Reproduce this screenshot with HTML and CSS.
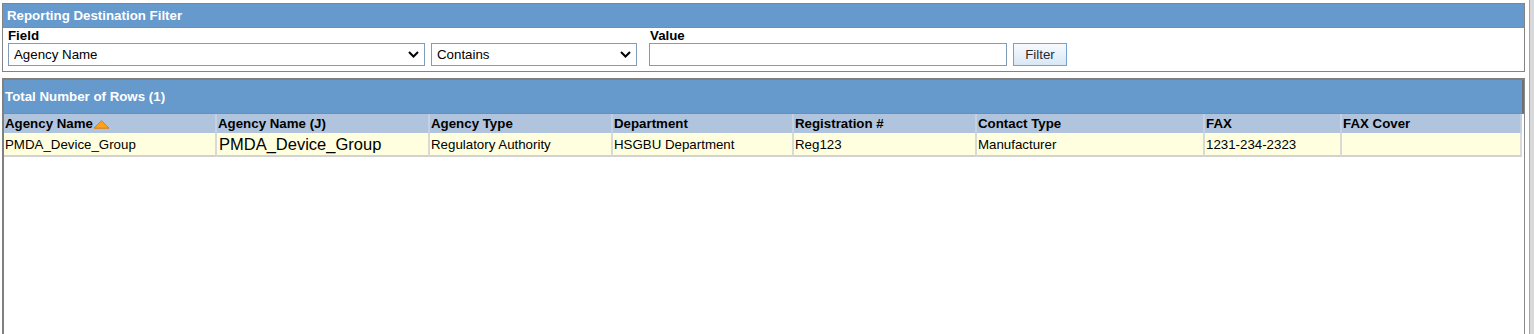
FILE: index.html
```html
<!DOCTYPE html>
<html lang="en">
<head>
<meta charset="utf-8">
<title>Reporting Destination Filter</title>
<link rel="stylesheet" href="styles.css">
</head>
<body>
<div class="page">
  <div class="main">
    <section class="panel filter-panel">
      <div class="panel-title">Reporting Destination Filter</div>
      <div class="filter-form">
        <div class="fgroup">
          <label class="flabel" for="fld">Field</label>
          <div class="select-wrap w-field">
            <select id="fld" class="fselect"><option>Agency Name</option></select>
            <svg class="chev" viewBox="0 0 11 7" width="11" height="7"><path d="M1 1 L5.5 5.5 L10 1" fill="none" stroke="#000" stroke-width="2"/></svg>
          </div>
        </div>
        <div class="fgroup">
          <span class="flabel">&nbsp;</span>
          <div class="select-wrap w-op">
            <select class="fselect"><option>Contains</option></select>
            <svg class="chev" viewBox="0 0 11 7" width="11" height="7"><path d="M1 1 L5.5 5.5 L10 1" fill="none" stroke="#000" stroke-width="2"/></svg>
          </div>
        </div>
        <div class="fgroup g-value">
          <label class="flabel vlabel" for="val">Value</label>
          <input id="val" class="finput" type="text">
        </div>
        <div class="fgroup">
          <span class="flabel">&nbsp;</span>
          <button class="fbtn" type="button">Filter</button>
        </div>
      </div>
    </section>

    <section class="panel results-panel">
      <div class="results-title">Total Number of Rows (1)</div>
      <table class="grid">
        <thead>
          <tr>
            <th class="c1">Agency Name<svg class="sort" viewBox="0 0 17 9" width="17" height="9"><path d="M8.5 0.8 L16 8.2 L1 8.2 Z" fill="#ffa31a" stroke="#e07800" stroke-width="1"/></svg></th>
            <th class="c2">Agency Name (J)</th>
            <th class="c3">Agency Type</th>
            <th class="c4">Department</th>
            <th class="c5">Registration #</th>
            <th class="c6">Contact Type</th>
            <th class="c7">FAX</th>
            <th class="c8">FAX Cover</th>
          </tr>
        </thead>
        <tbody>
          <tr>
            <td>PMDA_Device_Group</td>
            <td class="big">PMDA_Device_Group</td>
            <td>Regulatory Authority</td>
            <td>HSGBU Department</td>
            <td>Reg123</td>
            <td>Manufacturer</td>
            <td>1231-234-2323</td>
            <td></td>
          </tr>
        </tbody>
      </table>
    </section>
  </div>
  <div class="vstrip"></div>
</div>
</body>
</html>
```

FILE: styles.css
```css
* { box-sizing: border-box; }

html, body {
  margin: 0;
  padding: 0;
  background: #fff;
  height: 100%;
  overflow: hidden;
}

body {
  font-family: "Liberation Sans", Arial, sans-serif;
  font-size: 13.3px;
  color: #000;
}

.page {
  display: flex;
  height: 100vh;
}

.main {
  width: 1529px;
  padding: 3px 4px 0 2px;
  display: flex;
  flex-direction: column;
}

.vstrip {
  width: 5px;
  border-left: 1px solid #a8a8a8;
  background: #d9d9d9;
}

/* ---------- filter panel ---------- */
.filter-panel {
  width: 1523px;
  border: 1px solid #848484;
}

.panel-title {
  height: 24px;
  line-height: 23px;
  background: #6699cc;
  border-bottom: 1px solid #7c8ea3;
  color: #fff;
  font-weight: bold;
  padding-left: 4px;
}

.filter-form {
  display: flex;
  align-items: flex-start;
  gap: 6px;
  padding: 0 0 5px 5px;
}

.fgroup {
  display: flex;
  flex-direction: column;
}

.g-value { margin-left: 6px; }

.flabel {
  display: block;
  height: 15px;
  line-height: 15px;
  font-weight: bold;
  font-size: 13.3px;
}

.vlabel { padding-left: 1px; }

.select-wrap {
  position: relative;
  height: 23px;
}

.w-field { width: 417px; }
.w-op { width: 206px; }

.fselect {
  -webkit-appearance: none;
  appearance: none;
  width: 100%;
  height: 23px;
  border: 1px solid #7f9db9;
  border-radius: 0;
  background: #fff;
  font-family: "Liberation Sans", Arial, sans-serif;
  font-size: 13.3px;
  color: #000;
  padding: 0 0 0 5px;
  margin: 0;
}

.chev {
  position: absolute;
  right: 6px;
  top: 8px;
  pointer-events: none;
}

.finput {
  width: 358px;
  height: 23px;
  border: 1px solid #7f9db9;
  margin: 0;
  padding: 0 4px;
  font-family: "Liberation Sans", Arial, sans-serif;
  font-size: 13.3px;
}

.fbtn {
  width: 54px;
  height: 23px;
  margin: 0;
  padding: 0;
  border: 1px solid #73a3d6;
  border-radius: 0;
  background: linear-gradient(#f7fafd, #d9e7f5);
  font-family: "Liberation Sans", Arial, sans-serif;
  font-size: 13.3px;
  color: #2a2a2a;
}

/* ---------- results panel ---------- */
.results-panel {
  width: 1523px;
  margin-top: 6px;
  flex: 1;
  border-top: 2px solid #808080;
  border-left: 2px solid #808080;
  border-right: 1px solid #8a8a8a;
}

.results-title {
  height: 34px;
  line-height: 34px;
  background: #6699cc;
  border-right: 2px solid #707070;
  border-bottom: 1px solid #7e8a99;
  color: #fff;
  font-weight: bold;
  padding-left: 1px;
}

.grid {
  width: 1518px;
  table-layout: fixed;
  border-collapse: separate;
  border-spacing: 0;
}

.grid th {
  height: 19px;
  background: #b0c4de;
  border-right: 2px solid #c4d0e3;
  padding: 1px 1px 0 1px;
  text-align: left;
  font-weight: bold;
  font-size: 13.3px;
  line-height: 18px;
  white-space: nowrap;
  overflow: hidden;
  vertical-align: middle;
}

.grid .c1 { width: 213px; }
.grid .c2 { width: 213px; }
.grid .c3 { width: 183px; }
.grid .c4 { width: 181px; }
.grid .c5 { width: 183px; }
.grid .c6 { width: 228px; }
.grid .c7 { width: 137px; }
.grid .c8 { width: 180px; }

.sort {
  vertical-align: -1px;
}

.grid td {
  height: 24px;
  background: #ffffdf;
  border-right: 2px solid #d9d9d9;
  border-bottom: 2px solid #d2d2d2;
  padding: 1px 1px 0;
  font-size: 13.3px;
  white-space: nowrap;
  overflow: hidden;
  vertical-align: middle;
}

.grid td.big {
  font-size: 16.5px;
  line-height: 19px;
  padding-left: 2px;
}
```
